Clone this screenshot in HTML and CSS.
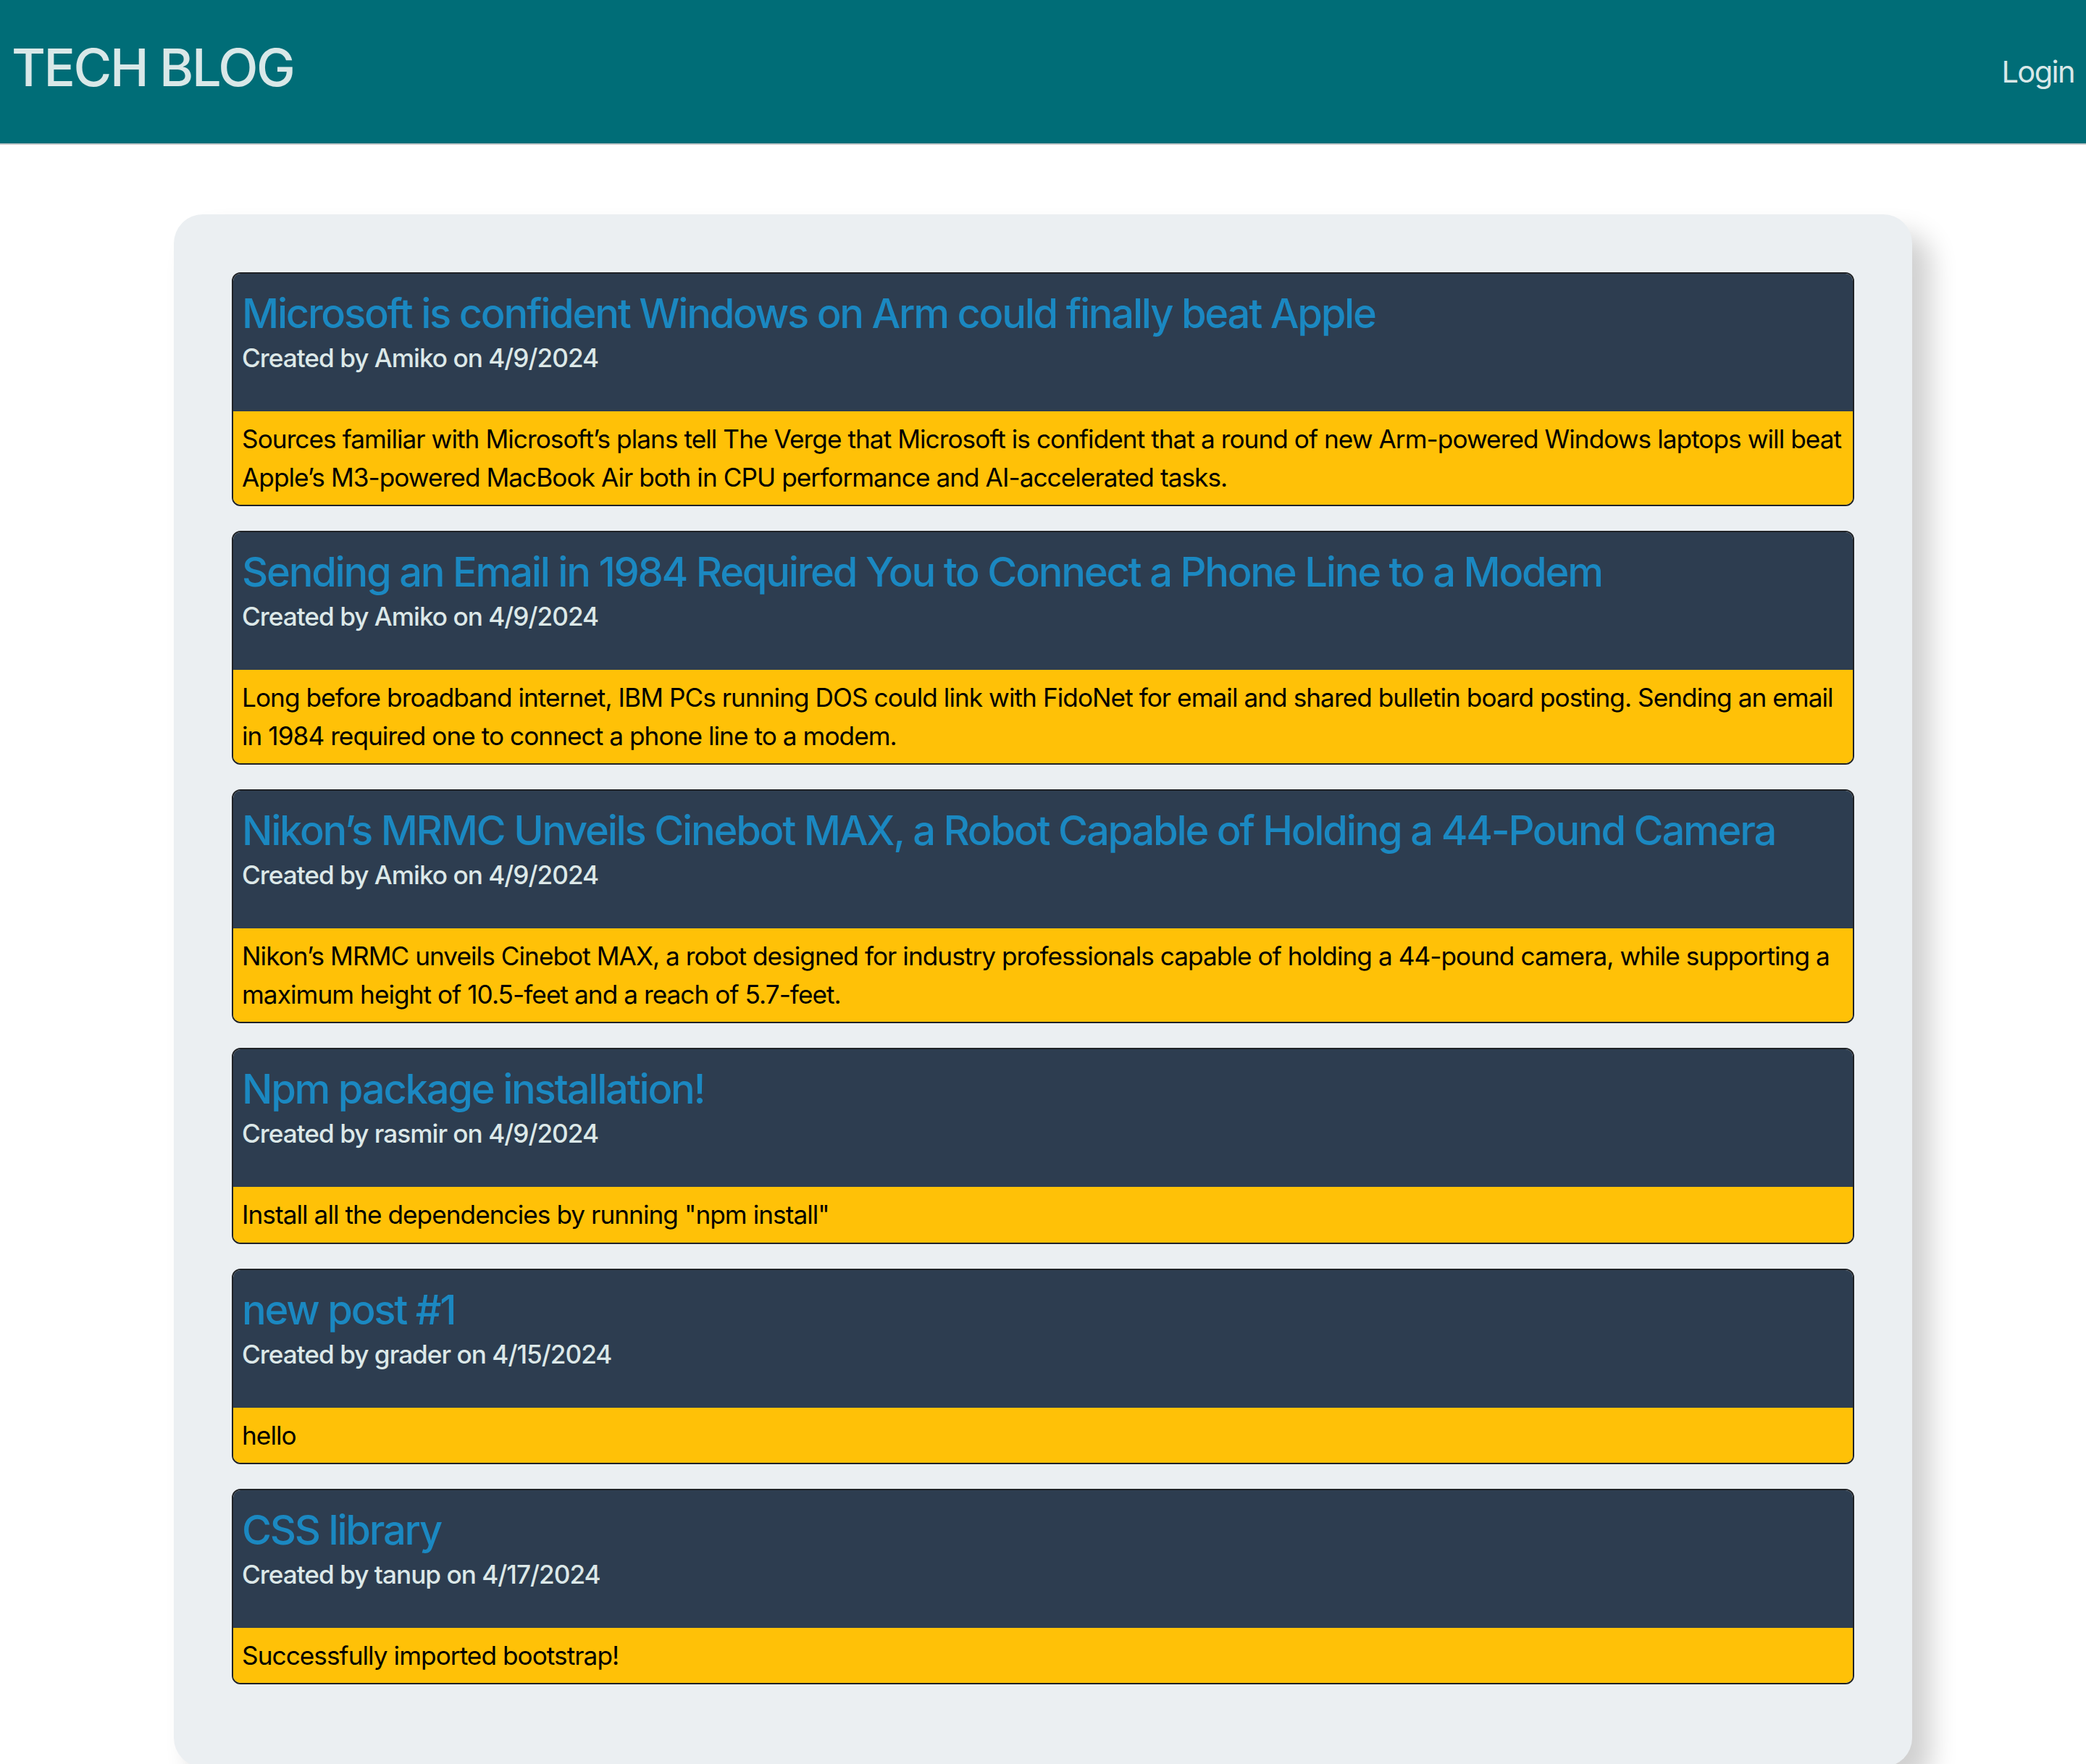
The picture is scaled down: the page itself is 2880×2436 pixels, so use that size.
FILE: index.html
```html
<!DOCTYPE html>
<html lang="en">
<head>
<meta charset="utf-8">
<title>Tech Blog</title>
<link rel="stylesheet" href="styles.css">
</head>
<body>
<header class="topbar">
  <h1 class="brand">TECH BLOG</h1>
  <a class="login" href="#">Login</a>
</header>
<main class="board">
  <article class="post">
    <div class="post-head">
      <h2 class="post-title">Microsoft is confident Windows on Arm could finally beat Apple</h2>
      <p class="post-meta">Created by Amiko on 4/9/2024</p>
    </div>
    <div class="post-body">
      <p>Sources familiar with Microsoft’s plans tell The Verge that Microsoft is confident that a round of new Arm-powered Windows laptops will beat Apple’s M3-powered MacBook Air both in CPU performance and AI-accelerated tasks.</p>
    </div>
  </article>
  <article class="post">
    <div class="post-head">
      <h2 class="post-title">Sending an Email in 1984 Required You to Connect a Phone Line to a Modem</h2>
      <p class="post-meta">Created by Amiko on 4/9/2024</p>
    </div>
    <div class="post-body">
      <p>Long before broadband internet, IBM PCs running DOS could link with FidoNet for email and shared bulletin board posting. Sending an email in 1984 required one to connect a phone line to a modem.</p>
    </div>
  </article>
  <article class="post">
    <div class="post-head">
      <h2 class="post-title">Nikon’s MRMC Unveils Cinebot MAX, a Robot Capable of Holding a 44-Pound Camera</h2>
      <p class="post-meta">Created by Amiko on 4/9/2024</p>
    </div>
    <div class="post-body">
      <p>Nikon’s MRMC unveils Cinebot MAX, a robot designed for industry professionals capable of holding a 44-pound camera, while supporting a maximum height of 10.5-feet and a reach of 5.7-feet.</p>
    </div>
  </article>
  <article class="post">
    <div class="post-head">
      <h2 class="post-title">Npm package installation!</h2>
      <p class="post-meta">Created by rasmir on 4/9/2024</p>
    </div>
    <div class="post-body">
      <p>Install all the dependencies by running "npm install"</p>
    </div>
  </article>
  <article class="post">
    <div class="post-head">
      <h2 class="post-title">new post #1</h2>
      <p class="post-meta">Created by grader on 4/15/2024</p>
    </div>
    <div class="post-body">
      <p>hello</p>
    </div>
  </article>
  <article class="post">
    <div class="post-head">
      <h2 class="post-title">CSS library</h2>
      <p class="post-meta">Created by tanup on 4/17/2024</p>
    </div>
    <div class="post-body">
      <p>Successfully imported bootstrap!</p>
    </div>
  </article>
</main>
</body>
</html>
```
FILE: styles.css
```css
* {
  box-sizing: border-box;
}

html, body {
  margin: 0;
  padding: 0;
  background: #ffffff;
  font-family: Inter, "Noto Sans", "Liberation Sans", sans-serif;
}

.topbar {
  display: flex;
  justify-content: space-between;
  align-items: center;
  height: 200px;
  padding: 0 16px 0 16px;
  background: #006d77;
  border-bottom: 2px solid #c9cbcc;
}

.brand {
  margin: 0;
  padding-bottom: 14px;
  font-size: 72px;
  font-weight: 500;
  color: #d9e8e8;
  letter-spacing: -2.4px;
}

.login {
  font-size: 41.6px;
  font-weight: 400;
  color: #d9e8e8;
  text-decoration: none;
  letter-spacing: -1.6px;
}

.board {
  width: 2400px;
  margin: 96px auto 0;
  padding: 80px 80px 80px;
  background: #ebeff2;
  border-radius: 40px;
  box-shadow: 26px 26px 36px rgba(0, 0, 0, 0.19);
}

.post {
  margin-bottom: 34px;
  border: 2px solid #1f2226;
  border-radius: 12px;
  overflow: hidden;
}

.post-head {
  padding: 22px 12px 47.5px;
  background: #2d3d50;
}

.post-title {
  margin: 0;
  font-size: 56px;
  font-weight: 500;
  line-height: 1.21;
  color: #1b88c1;
  letter-spacing: -2.2px;
}

.post-meta {
  margin: 0;
  font-size: 35.2px;
  line-height: 52.8px;
  font-weight: 500;
  color: #dce8e8;
  letter-spacing: -1px;
}

.post-body {
  padding: 12px 12px 11.5px;
  background: #ffc107;
}

.post-body p {
  margin: 0;
  font-size: 35.2px;
  line-height: 52.8px;
  color: #000000;
  letter-spacing: -0.95px;
}
```
